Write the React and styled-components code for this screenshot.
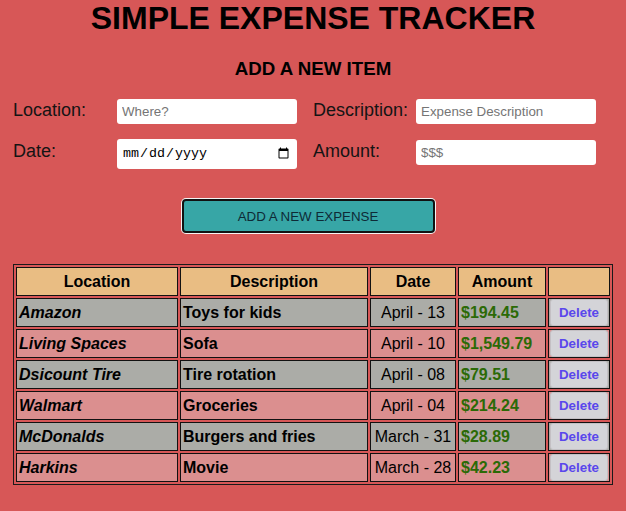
import React from 'react';
import styled, { createGlobalStyle } from 'styled-components';

const GlobalStyle = createGlobalStyle`
  html, body {
    margin: 0;
    background: #d75757;
    font-family: "Liberation Sans", Arial, sans-serif;
  }
`;

const Page = styled.div`
  width: 626px;
  min-height: 511px;
  color: #000;
`;

const Title = styled.h1`
  margin: 0;
  font-size: 32px;
  font-weight: 700;
  text-align: center;
  line-height: normal;
`;

const Subtitle = styled.h3`
  margin: 21px 0 0;
  font-size: 18.72px;
  font-weight: 700;
  text-align: center;
  line-height: normal;
`;

const Form = styled.form`
  margin-top: 19px;
  padding-left: 13px;
`;

const FormRow = styled.div`
  display: flex;
  align-items: baseline;
  gap: 16px;
  margin-top: ${({ $first }) => ($first ? '0' : '15px')};
`;

const Field = styled.div`
  display: flex;
  align-items: baseline;
`;

const Label = styled.label`
  width: ${({ $w }) => $w || 104}px;
  font-size: 18px;
  color: #141414;
`;

const Input = styled.input`
  box-sizing: border-box;
  width: 180px;
  height: ${({ type }) => (type === 'date' ? '30px' : '25px')};
  padding: 0 5px;
  border: none;
  border-radius: 3px;
  background: #fff;
  font-family: ${({ type }) =>
    type === 'date' ? '"Liberation Mono", monospace' : '"Liberation Sans", Arial, sans-serif'};
  font-size: 13.33px;
  color: #000;
  outline: none;

  &::placeholder {
    color: #757575;
  }
`;

const ButtonRow = styled.div`
  display: flex;
  justify-content: center;
  padding-right: 10px;
  margin-top: 30px;
`;

const AddButton = styled.button`
  box-sizing: border-box;
  width: 253px;
  height: 34px;
  background: #37a6a6;
  border: 2px solid #111;
  border-radius: 4px;
  box-shadow: 0 0 0 1px #f4f4f4;
  font-family: "Liberation Sans", Arial, sans-serif;
  font-size: 13.33px;
  color: #0e2a36;
  cursor: pointer;
`;

const Table = styled.table`
  margin: 31px auto 0;
  width: 600px;
  table-layout: fixed;
  border: 1px solid #1a1a1a;
  border-spacing: 2px;
`;

const Th = styled.th`
  box-sizing: border-box;
  height: 29px;
  padding: 1px;
  border: 1px solid #111;
  background: #e9bd83;
  font-size: 16px;
  font-weight: 700;
  text-align: center;
`;

const Td = styled.td`
  box-sizing: border-box;
  height: 29px;
  padding: 0 2px;
  border: 1px solid #111;
  background: ${({ $odd }) => ($odd ? '#abaca7' : '#db8f8f')};
  font-size: 16px;
  text-align: ${({ $center }) => ($center ? 'center' : 'left')};
  font-weight: ${({ $bold }) => ($bold ? 700 : 400)};
  font-style: ${({ $italic }) => ($italic ? 'italic' : 'normal')};
  color: ${({ $green }) => ($green ? '#2b6a06' : '#000')};
  white-space: nowrap;
  overflow: hidden;
`;

const ButtonCell = styled(Td)`
  padding: 0 1px;
`;

const DeleteButton = styled.button`
  box-sizing: border-box;
  display: block;
  width: 100%;
  height: 27px;
  padding: 0;
  background: #d4d4d8;
  border: 1px solid #c4c0c4;
  border-radius: 3px;
  font-family: "Liberation Sans", Arial, sans-serif;
  font-size: 13.33px;
  font-weight: 700;
  color: #5a47ec;
  cursor: pointer;
`;

const expenses = [
  { location: 'Amazon', description: 'Toys for kids', date: 'April - 13', amount: '$194.45' },
  { location: 'Living Spaces', description: 'Sofa', date: 'April - 10', amount: '$1,549.79' },
  { location: 'Dsicount Tire', description: 'Tire rotation', date: 'April - 08', amount: '$79.51' },
  { location: 'Walmart', description: 'Groceries', date: 'April - 04', amount: '$214.24' },
  { location: 'McDonalds', description: 'Burgers and fries', date: 'March - 31', amount: '$28.89' },
  { location: 'Harkins', description: 'Movie', date: 'March - 28', amount: '$42.23' },
];

const App = () => (
  <Page>
    <GlobalStyle />
    <Title>SIMPLE EXPENSE TRACKER</Title>
    <Subtitle>ADD A NEW ITEM</Subtitle>

    <Form onSubmit={(e) => e.preventDefault()}>
      <FormRow $first>
        <Field>
          <Label>Location:</Label>
          <Input type="text" placeholder="Where?" />
        </Field>
        <Field>
          <Label $w={103}>Description:</Label>
          <Input type="text" placeholder="Expense Description" />
        </Field>
      </FormRow>
      <FormRow>
        <Field>
          <Label>Date:</Label>
          <Input type="date" />
        </Field>
        <Field>
          <Label $w={103}>Amount:</Label>
          <Input type="text" placeholder="$$$" />
        </Field>
      </FormRow>
    </Form>

    <ButtonRow>
      <AddButton type="button">ADD A NEW EXPENSE</AddButton>
    </ButtonRow>

    <Table>
      <colgroup>
        <col style={{ width: 162 }} />
        <col style={{ width: 188 }} />
        <col style={{ width: 86 }} />
        <col style={{ width: 88 }} />
        <col />
      </colgroup>
      <thead>
        <tr>
          <Th>Location</Th>
          <Th>Description</Th>
          <Th>Date</Th>
          <Th>Amount</Th>
          <Th />
        </tr>
      </thead>
      <tbody>
        {expenses.map((item, i) => {
          const odd = i % 2 === 0;
          return (
            <tr key={item.location}>
              <Td $odd={odd} $bold $italic>{item.location}</Td>
              <Td $odd={odd} $bold>{item.description}</Td>
              <Td $odd={odd} $center>{item.date}</Td>
              <Td $odd={odd} $bold $green>{item.amount}</Td>
              <ButtonCell $odd={odd}>
                <DeleteButton type="button">Delete</DeleteButton>
              </ButtonCell>
            </tr>
          );
        })}
      </tbody>
    </Table>
  </Page>
);

export default App;
